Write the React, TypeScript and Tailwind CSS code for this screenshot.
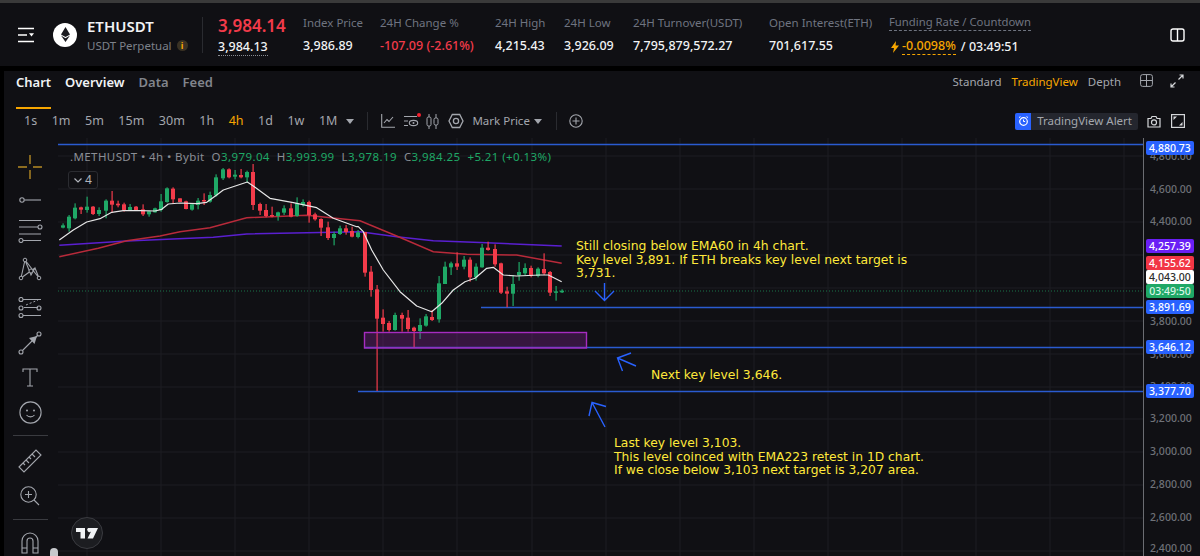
import React from "react";

type C = [number, number, number, number, number, "g" | "r"];
const GREEN = "#1fa866";
const RED = "#f23b4a";

// x, bodyTop, bodyBottom, wickTop, wickBottom — measured in crop units, mapped below
const left: C[] = [
  [68,196,203,190,205,"g"],[86,170,205,165,215,"g"],[105,143,175,130,178,"g"],[123,142,149,140,162,"r"],[141,140,150,110,158,"g"],
  [159,140,162,138,165,"r"],[178,150,162,142,168,"g"],[197,122,152,118,175,"g"],[216,122,134,93,158,"r"],[234,131,136,122,142,"r"],
  [252,133,151,128,155,"r"],[270,141,150,132,152,"g"],[288,140,150,138,152,"r"],[308,148,163,133,168,"r"],[327,154,163,152,170,"g"],
  [345,145,157,143,158,"g"],[363,124,150,102,155,"g"],[381,85,126,82,128,"g"],[400,86,118,82,130,"r"],[419,115,126,115,126,"r"],
  [438,124,147,122,148,"r"],[456,133,149,130,152,"g"],[474,122,135,114,148,"g"],[492,120,123,100,135,"r"],[511,105,125,95,128,"g"],
  [529,52,106,43,110,"g"],[548,28,55,24,60,"g"],[567,28,52,25,55,"r"],[585,44,50,30,58,"g"],[603,45,52,27,55,"r"],
  [622,36,52,32,68,"g"],[640,36,135,12,150,"r"],[660,132,152,128,165,"r"],[678,150,168,132,172,"r"],[697,165,168,140,172,"r"],
  [714,157,168,155,182,"g"],[733,145,158,136,165,"g"],[752,145,170,130,172,"r"],[771,130,168,112,170,"g"],[790,126,135,118,140,"g"],
  [808,126,165,122,188,"r"],[825,163,178,158,182,"r"],[844,177,203,175,228,"r"],[863,202,234,185,240,"r"],[882,222,234,215,256,"g"],
  [900,205,222,197,225,"g"],[919,205,216,195,224,"r"],[937,213,230,200,232,"r"],[955,217,231,210,235,"g"],
];
const right: C[] = [
  [194,36,158,36,170,"r"],[213,155,210,138,230,"r"],[232,208,296,195,513,"r"],[250,293,312,268,335,"r"],[268,309,330,303,335,"r"],
  [286,285,330,278,332,"g"],[305,285,296,278,335,"r"],[324,293,327,270,335,"r"],[342,323,333,320,382,"r"],[361,315,333,295,357,"g"],
  [379,289,317,282,320,"g"],[397,291,300,270,303,"r"],[416,190,298,168,308,"g"],[435,140,192,125,192,"g"],[454,130,142,125,165,"g"],
  [472,130,140,97,150,"r"],[491,119,140,108,148,"g"],[509,119,172,112,185,"r"],[527,140,172,130,182,"g"],[546,83,142,72,143,"g"],
  [565,83,90,65,92,"r"],[584,87,133,73,140,"r"],[603,130,218,128,222,"r"],[620,214,221,200,262,"r"],[638,192,221,165,258,"g"],
  [657,156,166,126,182,"g"],[675,144,160,130,165,"g"],[694,144,168,137,172,"r"],[714,146,168,142,172,"g"],[731,147,160,100,165,"r"],
  [749,156,218,153,228,"r"],[768,214,217,198,242,"g"],[787,212,217,208,219,"g"],
];
const toPage = (c: C, ox: number, oy: number): C => [ox + c[0] / 3, oy + c[1] / 3, oy + c[2] / 3, oy + c[3] / 3, oy + c[4] / 3, c[5]];
const candles: C[] = [...left.map((c) => toPage(c, 40, 160)), ...right.map((c) => toPage(c, 300, 220))];

const pts = (a: number[][], ox: number, oy: number) => a.map(([x, y]) => `${(ox + x / 3).toFixed(1)},${(oy + y / 3).toFixed(1)}`);
const white = [
  ...pts([[58,240],[100,210],[140,186],[180,176],[215,157],[250,152],[300,152],[345,153],[365,148],[385,132],[420,129],[470,131],[500,127],[530,105],[550,90],[622,66],[640,78],[690,115],[760,128],[830,143],[880,175],[950,200]], 40, 160),
  ...pts([[175,20],[190,35],[215,90],[250,150],[300,215],[350,258],[395,275],[425,250],[460,210],[495,185],[525,175],[560,145],[580,142],[610,165],[650,168],[720,165],[745,165],[785,185]], 300, 220),
].join(" ");
const red = [
  ...pts([[58,290],[175,265],[260,242],[360,228],[420,215],[510,203],[620,173],[800,166],[960,182]], 40, 160),
  ...pts([[290,48],[400,95],[500,103],[650,105],[785,130]], 300, 220),
].join(" ");
const purple = [
  ...pts([[58,256],[260,243],[520,232],[620,222],[960,215]], 40, 160),
  ...pts([[290,50],[400,62],[560,68],[785,78]], 300, 220),
].join(" ");

const vGrid = [87, 161, 235, 309, 383, 457, 532, 606, 680, 754, 828, 902, 976, 1050, 1124];
const hGrid = [156, 189, 222, 255, 288, 321, 354, 387, 419, 452, 485, 518, 551];

function Stat({ label, value, w, tone }: { label: string; value: string; w: string; tone?: string }) {
  return (
    <div className={`${w} shrink-0 flex flex-col gap-[7px]`}>
      <span className="text-[11.5px] leading-4 text-[#6f7480] whitespace-nowrap">{label}</span>
      <span className={`text-[12.5px] leading-4 font-medium whitespace-nowrap ${tone ?? "text-[#f1f3f5]"}`}>{value}</span>
    </div>
  );
}

const stroke = { fill: "none", stroke: "#a3a6ad", strokeWidth: 1.1 } as const;

function Tool({ children, h }: { children: React.ReactNode; h: string }) {
  return <div className={`${h} shrink-0 flex items-center justify-center w-full`}>{children}</div>;
}

function Tag({ y, bg, text, children }: { y: string; bg: string; text: string; children: string }) {
  return (
    <div className={`absolute left-[2px] w-[48px] h-[14px] rounded-[2px] flex items-center justify-center text-[10.5px] leading-none font-medium ${y} ${bg} ${text}`}>
      {children}
    </div>
  );
}

export default function App() {
  return (
    <div className="w-[1200px] h-[556px] overflow-hidden bg-black flex flex-col font-['Noto_Sans',sans-serif] text-white">
      <div className="h-[3px] shrink-0 bg-[#3a3a3a]" />
      {/* Header */}
      <div className="h-[63px] shrink-0 bg-[#101014] flex items-center pl-[17px]">
        <svg width="18" height="16" viewBox="0 0 18 16" className="shrink-0">
          <path d="M1 1.5h16M1 8h9M1 14.5h16" stroke="#fff" strokeWidth="1.6" />
          <path d="M12 6.2h5l-2.5 3.4z" fill="#fff" />
        </svg>
        <div className="ml-[18px] w-6 h-6 shrink-0 rounded-full bg-white flex items-center justify-center">
          <svg width="9" height="15" viewBox="0 0 9 15"><path d="M4.5 0 9 7.4 4.5 10 0 7.4zM0 8.6l4.5 2.6L9 8.6 4.5 15z" fill="#1a1a1f" /></svg>
        </div>
        <div className="ml-[10px] w-[115px] shrink-0 flex flex-col gap-[2px]">
          <span className="text-[15px] leading-5 font-semibold text-[#f1f3f5]">ETHUSDT</span>
          <span className="flex items-center text-[11.5px] leading-4 text-[#7d818a] whitespace-nowrap">
            USDT Perpetual
            <span className="ml-[5px] w-[11px] h-[11px] rounded-full bg-[#3a3224] flex items-center justify-center text-[9px] font-bold text-[#f7a600]">i</span>
          </span>
        </div>
        <div className="w-px h-9 shrink-0 bg-[#2a2b30]" />
        <div className="ml-[15px] w-[85px] shrink-0 flex flex-col gap-[1px]">
          <span className="text-[17px] leading-6 font-semibold text-[#f23b4a]">3,984.14</span>
          <span className="self-start text-[12.5px] leading-4 font-medium text-[#f1f3f5] border-b border-dotted border-[#8a8d94]">3,984.13</span>
        </div>
        <Stat label="Index Price" value="3,986.89" w="w-[77px]" />
        <Stat label="24H Change %" value="-107.09 (-2.61%)" w="w-[115px]" tone="text-[#f23b4a]" />
        <Stat label="24H High" value="4,215.43" w="w-[69px]" />
        <Stat label="24H Low" value="3,926.09" w="w-[69px]" />
        <Stat label="24H Turnover(USDT)" value="7,795,879,572.27" w="w-[136px]" />
        <Stat label="Open Interest(ETH)" value="701,617.55" w="w-[120px]" />
        <div className="w-[144px] shrink-0 flex flex-col gap-[7px]">
          <span className="self-start text-[11.3px] leading-4 text-[#6f7480] border-b border-dashed border-[#6f7480] whitespace-nowrap">Funding Rate / Countdown</span>
          <span className="flex items-center text-[12.5px] leading-4 font-medium text-[#f1f3f5] whitespace-nowrap">
            <svg width="8" height="12" viewBox="0 0 8 12" className="ml-[2px] mr-[3px]"><path d="M5 0 0 7h3l-1 5 6-7.5H4.6z" fill="#f7a600" /></svg>
            <span className="text-[#f7a600] border-b border-dashed border-[#f7a600]">-0.0098%</span>
            <span className="ml-[5px]">/ 03:49:51</span>
          </span>
        </div>
        <svg width="15" height="14" viewBox="0 0 15 14" className="ml-[137px] shrink-0">
          <rect x="1" y="1" width="13" height="12" rx="2" fill="none" stroke="#fff" strokeWidth="1.4" />
          <path d="M7.5 1v12" stroke="#fff" strokeWidth="1.4" />
        </svg>
      </div>
      <div className="h-[5px] shrink-0" />
      {/* Panel */}
      <div className="ml-1 flex-1 min-h-0 bg-[#101014] flex flex-col">
        {/* tabs */}
        <div className="h-[39px] shrink-0 flex items-start pt-px pl-3 pr-[16px]">
          <div className="flex gap-[14px] text-[13px] font-semibold leading-5">
            <span className="h-[37px] border-b-[2px] border-[#f7a600] text-[#f1f3f5] w-[35px] whitespace-nowrap">Chart</span>
            <span className="text-[#f1f3f5]">Overview</span>
            <span className="text-[#81858c]">Data</span>
            <span className="text-[#81858c]">Feed</span>
          </div>
          <div className="ml-auto flex items-start gap-[10px] text-[11.5px] leading-5 text-[#a3a6ad]">
            <span>Standard</span>
            <span className="text-[#f7a600]">TradingView</span>
            <span>Depth</span>
            <svg width="13" height="13" viewBox="0 0 13 13" className="ml-[9px] mt-[2px]"><rect x=".6" y=".6" width="11.8" height="11.8" rx="2" fill="none" stroke="#a3a6ad" /><path d="M6.5 .6v11.8M.6 6.5h11.8" stroke="#a3a6ad" /></svg>
            <svg width="14" height="14" viewBox="0 0 14 14" className="ml-[7px] mt-[2px]"><path d="M8.5 5.5 13 1M9.5 1H13v3.5" fill="none" stroke="#d5d7da" strokeWidth="1.2" /><path d="M5.5 8.5 1 13M1 9.5V13h3.5" fill="none" stroke="#d5d7da" strokeWidth="1.2" /></svg>
          </div>
        </div>
        {/* interval row */}
        <div className="h-[28px] shrink-0 flex items-center pb-[6px] pl-5 pr-[15px] text-[12.5px] text-[#a3a6ad]">
          <div className="flex gap-[14.5px] items-center whitespace-nowrap">
            <span>1s</span><span>1m</span><span>5m</span><span>15m</span><span>30m</span><span>1h</span>
            <span className="text-[#f7a600]">4h</span><span>1d</span><span>1w</span><span>1M</span>
          </div>
          <svg width="8" height="5" viewBox="0 0 8 5" className="ml-[9px]"><path d="M0 0h8L4 5z" fill="#a3a6ad" /></svg>
          <div className="ml-[13px] w-px h-[18px] bg-[#2a2b30]" />
          <svg width="14" height="14" viewBox="0 0 14 14" className="ml-[13px]"><path d="M.7 0v13.3H14" {...stroke} /><path d="M3 9l3-3.5 2 2L12 3" {...stroke} /></svg>
          <div className="relative ml-[9px]">
            <svg width="15" height="13" viewBox="0 0 15 13"><path d="M0 1.5h13M0 6h4M0 10.5h4" {...stroke} /><ellipse cx="9.5" cy="8" rx="4.2" ry="2.6" {...stroke} /><circle cx="9.5" cy="8" r="1" fill="#a3a6ad" /></svg>
            <span className="absolute -top-[2px] -right-[2px] w-[4px] h-[4px] rounded-full bg-[#f6212f]" />
          </div>
          <svg width="13" height="15" viewBox="0 0 13 15" className="ml-[7px]"><path d="M3 0v15M10 0v15" stroke="#a3a6ad" /><rect x="1" y="3" width="4" height="9" rx="1.5" fill="#101014" stroke="#a3a6ad" /><rect x="8" y="4" width="4" height="7" rx="1.5" fill="#101014" stroke="#a3a6ad" /></svg>
          <svg width="16" height="16" viewBox="0 0 16 16" className="ml-[9px]"><path d="M4.3 1.5h7.4L15 8l-3.3 6.5H4.3L1 8z" fill="none" stroke="#a3a6ad" strokeWidth="1.3" /><circle cx="8" cy="8" r="2.6" fill="none" stroke="#a3a6ad" strokeWidth="1.3" /></svg>
          <span className="ml-[8px] text-[11.5px] whitespace-nowrap">Mark Price</span>
          <svg width="8" height="5" viewBox="0 0 8 5" className="ml-[4px]"><path d="M0 0h8L4 5z" fill="#a3a6ad" /></svg>
          <div className="ml-[14px] w-px h-[18px] bg-[#2a2b30]" />
          <svg width="14" height="14" viewBox="0 0 14 14" className="ml-[12px]"><circle cx="7" cy="7" r="6.2" {...stroke} /><path d="M7 3.5v7M3.5 7h7" {...stroke} /></svg>
          <div className="ml-auto flex items-center">
            <div className="flex items-center h-[17px] rounded-[2px] bg-[#24262e] overflow-hidden whitespace-nowrap text-[11.5px] text-[#a3a6ad]">
              <span className="w-4 h-full bg-[#2962ff] flex items-center justify-center">
                <svg width="11" height="11" viewBox="0 0 11 11"><circle cx="5.5" cy="5.5" r="3.8" fill="none" stroke="#fff" strokeWidth="1.2" /><path d="M5.5 3.5v2h1.6M1 1.5l1.5-.8M10 1.5l-1.5-.8" fill="none" stroke="#fff" /></svg>
              </span>
              <span className="px-[6px]">TradingView Alert</span>
            </div>
            <svg width="14" height="13" viewBox="0 0 14 13" className="ml-[9px]"><path d="M1 3.5h3l1-2h4l1 2h3v8.5H1z" fill="none" stroke="#d5d7da" strokeWidth="1.2" /><circle cx="7" cy="7.4" r="2.5" fill="none" stroke="#d5d7da" strokeWidth="1.2" /></svg>
            <svg width="14" height="14" viewBox="0 0 14 14" className="ml-[10px]"><rect x=".6" y=".6" width="12.8" height="12.8" fill="none" stroke="#d5d7da" strokeWidth="1.2" /><path d="M2.5 2.5h3.5L2.5 6zM11.5 11.5H8L11.5 8z" fill="#d5d7da" /></svg>
          </div>
        </div>
        {/* chart row */}
        <div className="flex-1 min-h-0 flex">
          {/* toolbar */}
          <div className="w-[54px] shrink-0 flex flex-col items-center pt-[7px] overflow-hidden pr-[2px]">
            <Tool h="h-[44px]">
              <svg width="24" height="24" viewBox="0 0 24 24"><path d="M12 0v9M12 15v9M0 12h9M15 12h9" stroke="#b58a24" strokeWidth="1.4" /></svg>
            </Tool>
            <Tool h="h-[22px]">
              <svg width="24" height="8" viewBox="0 0 24 8"><circle cx="4" cy="4" r="2.2" {...stroke} /><path d="M6.5 4H23" {...stroke} /></svg>
            </Tool>
            <Tool h="h-[40px]">
              <svg width="26" height="24" viewBox="0 0 26 24"><path d="M2 1.5h22M2 8h19M2 15h22M6 21.5h18" {...stroke} /><circle cx="23" cy="8" r="2" {...stroke} /><circle cx="4" cy="21.5" r="2" {...stroke} /></svg>
            </Tool>
            <Tool h="h-[36px]">
              <svg width="24" height="24" viewBox="0 0 24 24"><path d="M3 21 7 3l6 15 4-7 4 10M3 21l14-10M7 3l14 18" {...stroke} /><circle cx="3" cy="21" r="1.8" fill="#101014" stroke="#a3a6ad" /><circle cx="7" cy="3" r="1.8" fill="#101014" stroke="#a3a6ad" /><circle cx="13" cy="14" r="2" fill="#101014" stroke="#a3a6ad" /><circle cx="21" cy="21" r="1.8" fill="#101014" stroke="#a3a6ad" /></svg>
            </Tool>
            <Tool h="h-[42px]">
              <svg width="24" height="22" viewBox="0 0 24 22"><path d="M5 2.5h18M6 10.5h14M5 18.5h18" {...stroke} /><path d="M8 8 20 3" fill="none" stroke="#a3a6ad" strokeDasharray="2 2" /><circle cx="3" cy="2.5" r="2" {...stroke} /><circle cx="3" cy="11" r="2" {...stroke} /><circle cx="21" cy="11" r="2" {...stroke} /><circle cx="3" cy="18.5" r="2" {...stroke} /></svg>
            </Tool>
            <Tool h="h-[28px]">
              <svg width="24" height="24" viewBox="0 0 24 24"><circle cx="3" cy="21" r="2" {...stroke} /><circle cx="21" cy="3" r="2" {...stroke} /><path d="M4.5 19.5 19.5 4.5" {...stroke} /><path d="M19 5l-8 2 5.5 6z" fill="#a3a6ad" /></svg>
            </Tool>
            <Tool h="h-[40px]">
              <svg width="16" height="19" viewBox="0 0 16 19"><path d="M1 4V1h14v3M8 1v17M5 18h6" {...stroke} /></svg>
            </Tool>
            <Tool h="h-[30px]">
              <svg width="23" height="23" viewBox="0 0 23 23"><circle cx="11.5" cy="11.5" r="10.6" {...stroke} /><circle cx="8" cy="9.5" r="1" fill="#a3a6ad" /><circle cx="15" cy="9.5" r="1" fill="#a3a6ad" /><path d="M7.5 14c2 2.5 6 2.5 8 0" {...stroke} /></svg>
            </Tool>
            <Tool h="h-[16px]"><div className="w-[35px] h-px bg-[#3a3b40]" /></Tool>
            <Tool h="h-[36px]">
              <svg width="24" height="24" viewBox="0 0 24 24"><path d="M1 18 18 1l5 5L6 23z" {...stroke} /><path d="M5 14l2 2M8 11l3 3M11 8l2 2M14 5l3 3" {...stroke} /></svg>
            </Tool>
            <Tool h="h-[34px]">
              <svg width="20" height="20" viewBox="0 0 20 20"><circle cx="8.5" cy="8.5" r="7.7" {...stroke} /><path d="M8.5 5v7M5 8.5h7M14 14l5 5" {...stroke} /></svg>
            </Tool>
            <Tool h="h-[12px]"><div className="w-[35px] h-px bg-[#3a3b40]" /></Tool>
            <Tool h="h-[36px]">
              <svg width="18" height="22" viewBox="0 0 18 22"><path d="M1 21V9a8 8 0 0 1 16 0v12h-5V9a3 3 0 0 0-6 0v12zM1 16h5M12 16h5" {...stroke} /></svg>
            </Tool>
          </div>
          {/* plot + axis */}
          <div className="relative flex-1 min-w-0">
            <svg width="1085" height="418" viewBox="58 138 1085 418" className="block">
              {vGrid.map((x) => <path key={x} d={`M${x} 138V556`} stroke="#1c1d22" strokeWidth="1" />)}
              {hGrid.map((y) => <path key={y} d={`M58 ${y}H1143`} stroke="#1c1d22" strokeWidth="1" />)}
              <path d="M58 291H1143" stroke="#1fa866" strokeWidth="1" strokeDasharray="1 2" opacity=".65" />
              <path d="M58 144.5H1143" stroke="#2a5bd0" strokeWidth="1.5" />
              <path d="M481 307.5H1143" stroke="#2a5bd0" strokeWidth="1.5" />
              <path d="M364 347.5H1143" stroke="#2a5bd0" strokeWidth="1.5" />
              <path d="M358 391.5H1143" stroke="#2a5bd0" strokeWidth="1.5" />
              <polyline points={purple} fill="none" stroke="#5a1fd0" strokeWidth="1.5" />
              <polyline points={red} fill="none" stroke="#b82a3a" strokeWidth="1.5" />
              {candles.map(([x, t, b, wt, wb, k], i) => (
                <g key={i} fill={k === "g" ? GREEN : RED} stroke="none">
                  <rect x={Math.round(x) - 0.5} y={wt} width="1.2" height={wb - wt} />
                  <rect x={Math.round(x) - 2} y={t} width="4" height={Math.max(b - t, 1.5)} />
                </g>
              ))}
              <polyline points={white} fill="none" stroke="#e6e6e6" strokeWidth="1.2" strokeLinejoin="round" />
              <rect x="364.5" y="332.5" width="222" height="15.5" fill="#9c27b0" fillOpacity=".28" stroke="#a62cc0" strokeWidth="1.4" />
              <path d="M604.5 283V300M595 291l9.5 9.5 9.5-9.5" fill="none" stroke="#2962ff" strokeWidth="1.4" />
              <path d="M636 366 617.5 358M631 353l-13.5 5 5 13" fill="none" stroke="#2962ff" strokeWidth="1.4" />
              <path d="M605 427 592 402.5M589 416l3-13.5 14 4" fill="none" stroke="#2962ff" strokeWidth="1.4" />
            </svg>
            {/* Legend */}
            <div className="absolute left-[12px] top-[11px] flex items-center gap-[7px] whitespace-nowrap text-[11.5px] leading-4 tracking-[0.4px] text-[#8b8e95]">
              <span>.METHUSDT • 4h • Bybit</span>
              <span>O<span className="text-[#1fa866]">3,979.04</span></span>
              <span>H<span className="text-[#1fa866]">3,993.99</span></span>
              <span>L<span className="text-[#1fa866]">3,978.19</span></span>
              <span>C<span className="text-[#1fa866]">3,984.25</span></span>
              <span className="text-[#1fa866]">+5.21 (+0.13%)</span>
            </div>
            <div className="absolute left-[10px] top-[33px] w-[30px] h-[18px] rounded-[3px] border border-[#2b2c31] bg-[#101014] flex items-center justify-center gap-[3px] text-[12px] text-[#b2b5bc]">
              <svg width="8" height="5" viewBox="0 0 8 5"><path d="M.5.5 4 4 7.5.5" fill="none" stroke="#b2b5bc" strokeWidth="1.2" /></svg>
              4
            </div>
            {/* Annotations */}
            <div className="absolute left-[518px] top-[101px] w-[340px] text-[12.4px] leading-[13.5px] text-[#ffe93b] font-['DejaVu_Sans',sans-serif]">
              Still closing below EMA60 in 4h chart.<br />Key level 3,891. If ETH breaks key level next target is<br />3,731.
            </div>
            <div className="absolute left-[593px] top-[230px] text-[12.4px] leading-[14px] text-[#ffe93b] font-['DejaVu_Sans',sans-serif] whitespace-nowrap">
              Next key level 3,646.
            </div>
            <div className="absolute left-[556px] top-[299px] text-[12.3px] leading-[13.5px] text-[#ffe93b] font-['DejaVu_Sans',sans-serif] whitespace-nowrap">
              Last key level 3,103.<br />This level coinced with EMA223 retest in 1D chart.<br />If we close below 3,103 next target is 3,207 area.
            </div>
            {/* TV logo */}
            <div className="absolute left-[13px] top-[379px] w-8 h-8 rounded-full bg-[#1c1d21] border border-[#3a3b40] flex items-center justify-center">
              <svg width="22" height="11" viewBox="0 0 22 11"><path d="M0 0h9v10.5H4.5V4H0zM12 0h10L17 10.5H11.5L15 3.5a2 2 0 1 1-3-3.5z" fill="#f1f3f5" /></svg>
            </div>
            <div className="absolute -left-[8px] top-[410px] w-2 h-[20px] rounded-t-full bg-[#c6c8cc]" />
          </div>
          <div className="relative w-[57px] shrink-0 border-l border-[#6b6d72] text-[#6f7278] text-[10.5px] font-medium">
            {[
              ["top-[11px]", "4,800.00"],["top-[44px]", "4,600.00"],["top-[76px]", "4,400.00"],["top-[176px]", "3,800.00"],["top-[209px]", "3,600.00"],
              ["top-[241px]", "3,400.00"],["top-[273px]", "3,200.00"],["top-[306px]", "3,000.00"],["top-[339px]", "2,800.00"],["top-[372px]", "2,600.00"],["top-[403px]", "2,400.00"],
            ].map(([t, s]) => (
              <div key={s} className={`absolute left-[6px] ${t} leading-[14px]`}>{s}</div>
            ))}
            <Tag y="top-[3px]" bg="bg-[#2962ff]" text="text-white">4,880.73</Tag>
            <Tag y="top-[101px]" bg="bg-[#6a1ff5]" text="text-white">4,257.39</Tag>
            <Tag y="top-[118px]" bg="bg-[#f23645]" text="text-white">4,155.62</Tag>
            <Tag y="top-[132px]" bg="bg-white" text="text-[#2b2b2b]">4,043.00</Tag>
            <Tag y="top-[146px]" bg="bg-[#1fa866]" text="text-[#d9f5e7]">03:49:50</Tag>
            <Tag y="top-[162px]" bg="bg-[#2962ff]" text="text-white">3,891.69</Tag>
            <Tag y="top-[202px]" bg="bg-[#2962ff]" text="text-white">3,646.12</Tag>
            <Tag y="top-[246px]" bg="bg-[#2962ff]" text="text-white">3,377.70</Tag>
          </div>
        </div>
      </div>
    </div>
  );
}
